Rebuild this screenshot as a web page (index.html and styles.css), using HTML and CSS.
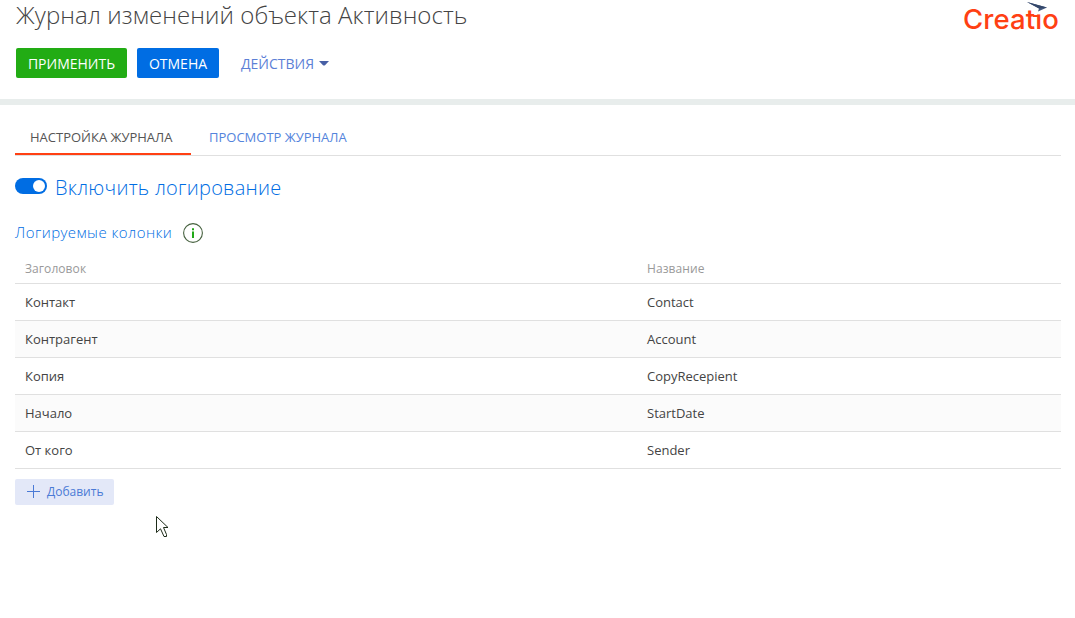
FILE: index.html
```html
<!DOCTYPE html>
<html lang="ru">
<head>
<meta charset="utf-8">
<title>Журнал изменений объекта Активность</title>
<link rel="stylesheet" href="styles.css">
</head>
<body>
<header class="header">
  <div class="title-row">
    <h1 class="title">Журнал изменений объекта Активность</h1>
    <div class="logo"><span class="logo-text">Creatio</span>
      <svg class="logo-arrow" width="30" height="18" viewBox="0 0 30 18"><path d="M9 6H18V12.4H9Z" fill="#fff"/><path d="M7 13H13V15H7Z" fill="#ff4013"/><path d="M1 0 21 5.5 12 9.5 13 6.5Z" fill="#43587d"/><path d="M1 0 21 5.5 13 6.5Z" fill="#34476a"/></svg>
    </div>
  </div>
  <div class="actions">
    <button class="btn btn-apply">ПРИМЕНИТЬ</button>
    <button class="btn btn-cancel">ОТМЕНА</button>
    <button class="btn-menu"><span>ДЕЙСТВИЯ</span><svg width="10" height="5" viewBox="0 0 10 5"><path d="M0 0H10L6 4.2Q5 5 4 4.2Z" fill="#475fa5"/></svg></button>
  </div>
</header>
<main class="content">
  <nav class="tabs">
    <a class="tab tab-active">НАСТРОЙКА ЖУРНАЛА</a>
    <a class="tab">ПРОСМОТР ЖУРНАЛА</a>
  </nav>
  <div class="logging"><span class="toggle"><span class="knob"></span></span><span class="logging-label">Включить логирование</span></div>
  <div class="section">
    <span class="section-label">Логируемые колонки</span>
    <svg width="20" height="20" viewBox="0 0 20 20"><circle cx="10" cy="10" r="9.4" fill="#fff" stroke="#46613f" stroke-width="1.1"/><path d="M9 5.2h2v2H9zM9 8.5h2V15H9z" fill="#20a817"/></svg>
  </div>
  <div class="grid">
    <div class="row head"><span>Заголовок</span><span>Название</span></div>
    <div class="row"><span>Контакт</span><span>Contact</span></div>
    <div class="row alt"><span>Контрагент</span><span>Account</span></div>
    <div class="row"><span>Копия</span><span>CopyRecepient</span></div>
    <div class="row alt"><span>Начало</span><span>StartDate</span></div>
    <div class="row"><span>От кого</span><span>Sender</span></div>
  </div>
  <button class="btn-add"><svg width="13" height="13" viewBox="0 0 13 13"><path d="M6.5 0V13M0 6.5H13" stroke="#4a7ad6" fill="none"/></svg><span>Добавить</span></button>
</main>
<svg class="cursor" width="13" height="22" viewBox="0 0 13 22"><path d="M.5 .5V16.5L4.5 12.8 8 20.5H10.5V18.5L7.5 11.5H12Z" fill="#fff" stroke="#1d2b19"/></svg>
</body>
</html>
```
FILE: styles.css
```css
* { box-sizing: border-box; }
body { margin: 0; width: 1075px; height: 618px; overflow: hidden; background: #fff; color: #444; font: 13px "Open Sans", sans-serif; }
button { border: 0; padding: 0; font: inherit; }
.header { height: 105px; border-bottom: 6px solid #e8edec; }
.title-row { display: flex; justify-content: space-between; height: 48px; padding: 0 16px; }
.title { margin: 0; font-size: 24px; font-weight: 300; line-height: 30px; letter-spacing: 0.08px; white-space: nowrap; }
.logo { position: relative; width: 96px; height: 40px; }
.logo-text { font: 500 27.5px/38px Inter, sans-serif; letter-spacing: 0.1px; color: #ff4013; }
.logo-arrow { position: absolute; left: 63px; top: 2px; }
.actions { display: flex; align-items: center; height: 30px; padding-left: 16px; }
.btn { height: 30px; border-radius: 2px; color: #fff; font-size: 14px; line-height: 32px; }
.btn-apply { width: 111px; background: #22ac14; }
.btn-cancel { width: 82px; margin-left: 10px; background: #006de3; }
.btn-menu { display: flex; align-items: center; gap: 5px; height: 30px; margin-left: 22px; padding-top: 1px; background: none; color: #5c80d6; font-size: 14px; line-height: 32px; }
.content { padding: 15px 14px 0 15px; }
.tabs { display: flex; height: 36px; border-bottom: 1px solid #e0e0e0; }
.tab { height: 35px; margin-right: 3px; padding: 0 15px; color: #5484dc; line-height: 35px; white-space: nowrap; }
.tab-active { width: 176px; color: #555; border-bottom: 2px solid #ff4013; }
.logging { display: flex; align-items: center; gap: 8px; height: 60px; }
.toggle { display: flex; justify-content: flex-end; width: 32px; height: 16px; padding: 2px; border-radius: 8px; background: #006de3; }
.knob { width: 12px; height: 12px; border-radius: 50%; background: #fff; }
.logging-label { font-size: 20px; font-weight: 300; letter-spacing: 0.25px; color: #006de3; line-height: 28px; padding-top: 3px; }
.section { display: flex; align-items: center; gap: 11px; height: 34px; }
.section-label { font-size: 15px; font-weight: 300; letter-spacing: 0.45px; line-height: 20px; padding-bottom: 2px; color: #006de3; }
.grid { padding-top: 4px; }
.row { display: grid; grid-template-columns: 622px 1fr; align-items: center; height: 37px; padding-left: 10px; border-bottom: 1px solid #e0e0e0; }
.head { height: 30px; color: #999; font-size: 12px; letter-spacing: 0.08px; }
.alt { background: #fbfbfb; }
.btn-add { display: flex; align-items: center; gap: 7px; width: 99px; height: 26px; margin-top: 10px; padding: 0 0 1px 12px; border-radius: 2px; background: #e3e8f8; color: #4a7ad6; font-size: 12px; }
.cursor { position: absolute; left: 156px; top: 516px; }
```
